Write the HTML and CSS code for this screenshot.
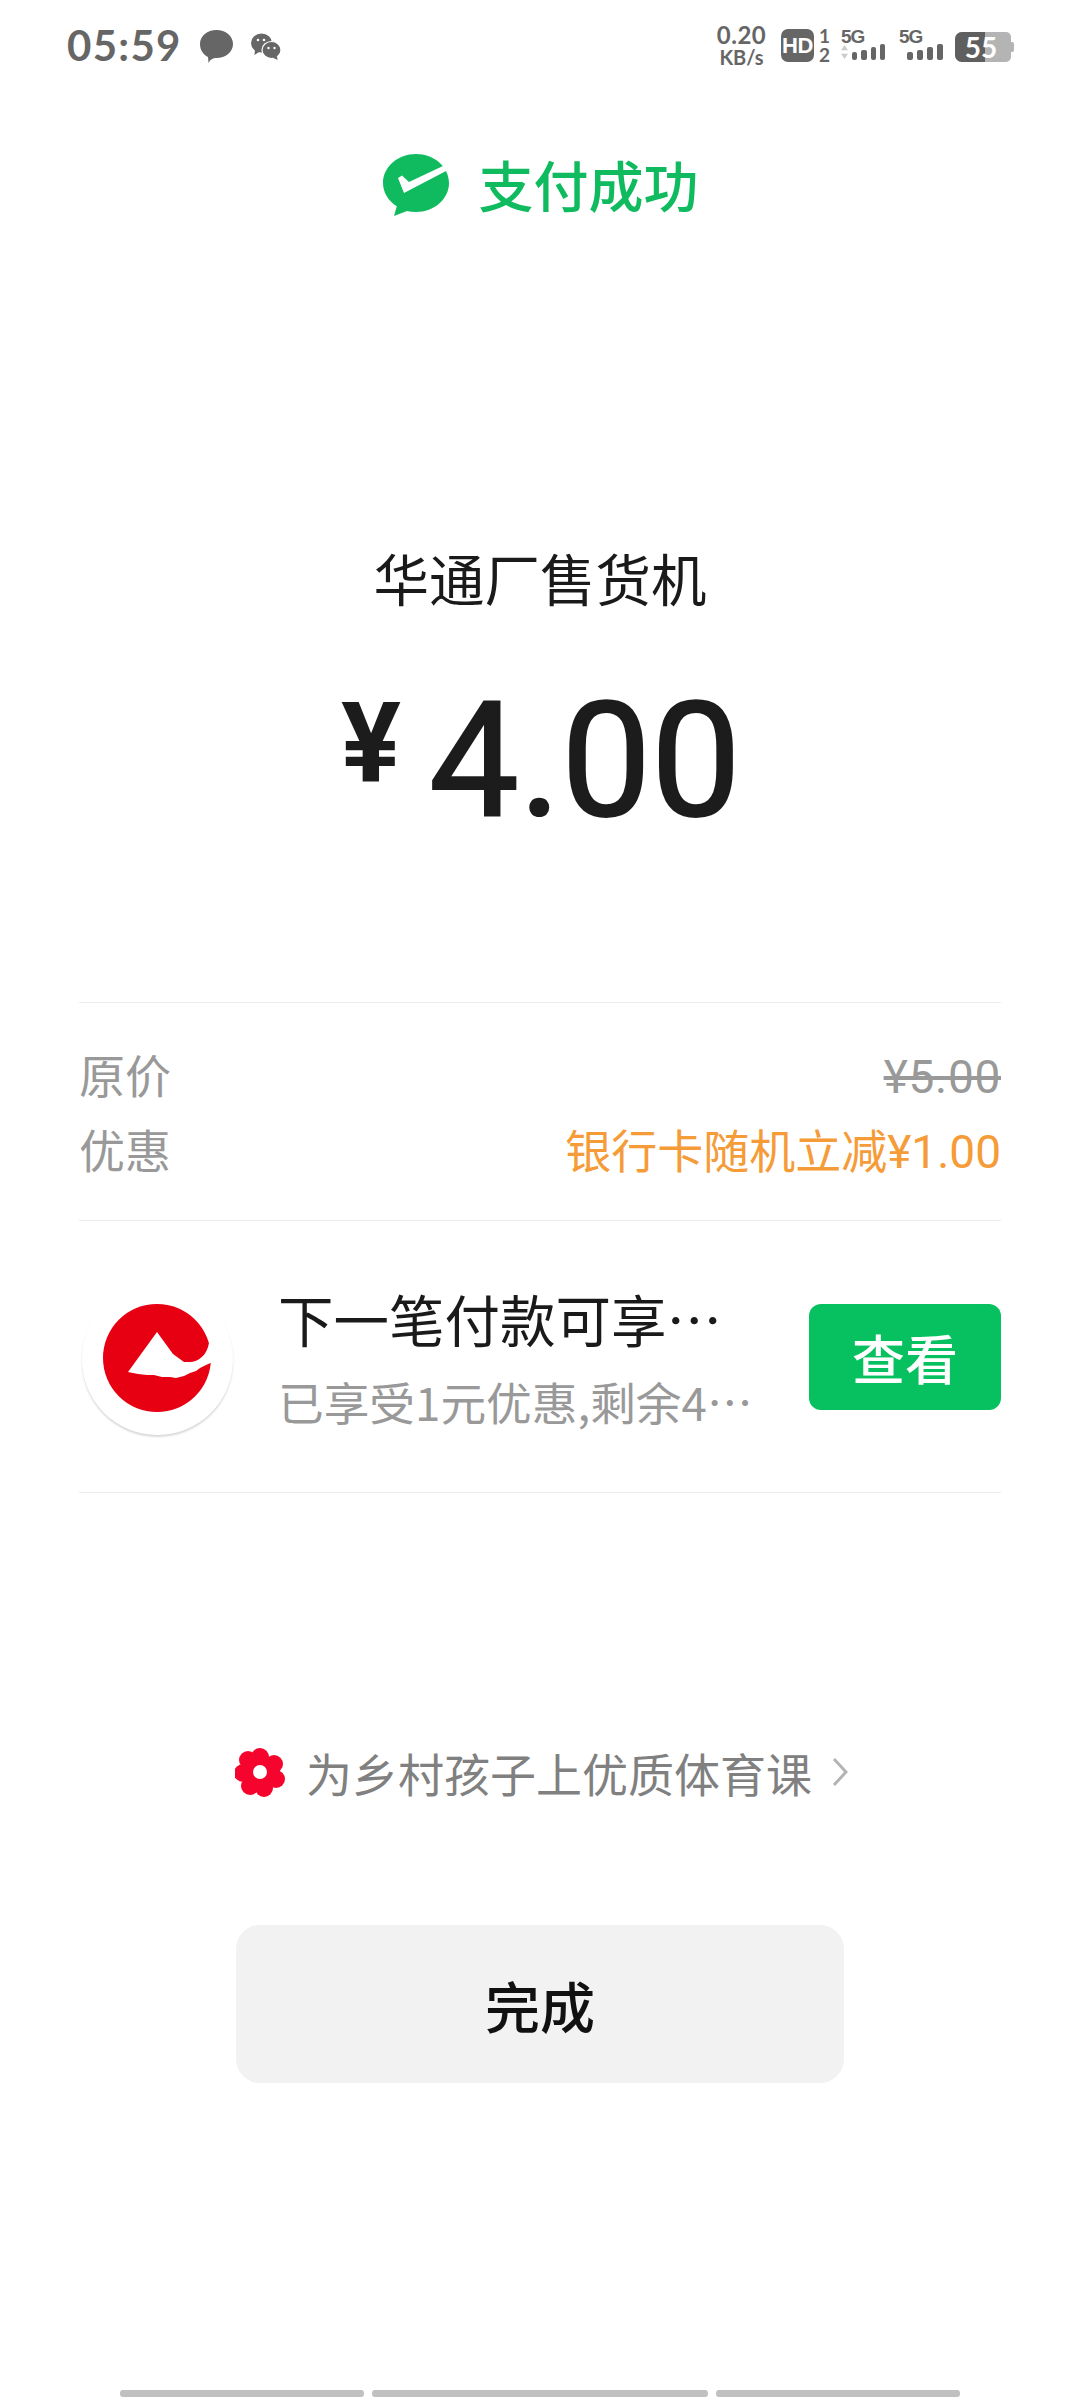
FILE: index.html
```html
<!DOCTYPE html>
<html lang="zh-CN">
<head>
<meta charset="utf-8">
<title>支付成功</title>
<link rel="stylesheet" href="styles.css">
</head>
<body>
<div class="page">
  <div class="status">
    <div class="status-left">
      <span class="time">05:59</span>
      <svg class="ic-bubble" viewBox="0 0 33 33"><path fill="#666" d="M16.500 0C25.600 0 33 6 33 14c0 8-7.400 14-16.500 14-2.300 0-4 .2-6.500 2.500L8.500 33l-.5-6C3 24.500 0 19.800 0 14 0 6 7.400 0 16.500 0z"/></svg>
      <svg class="ic-wechat" viewBox="0 0 30 27"><ellipse cx="10.500" cy="10" rx="10.500" ry="9.500" fill="#666"/><path d="M4 16l-.5 6 6-4z" fill="#666"/><ellipse cx="20.500" cy="17" rx="9.500" ry="8.500" fill="#666" stroke="#fff" stroke-width="1.200"/><path d="M26 23l.5 4-5-2.500z" fill="#666"/><circle cx="7" cy="7" r="1.300" fill="#fff"/><circle cx="13" cy="7" r="1.300" fill="#fff"/><circle cx="17.500" cy="15" r="1.200" fill="#fff"/><circle cx="23.500" cy="15" r="1.200" fill="#fff"/></svg>
    </div>
    <div class="status-right">
      <div class="speed"><span class="speed-num">0.20</span><span class="speed-unit">KB/s</span></div>
      <span class="hd">HD</span>
      <div class="sim-nums"><span>1</span><span>2</span></div>
      <div class="sig">
        <span class="sig-label">5G</span>
        <div class="sig-row">
          <svg class="sig-arrows" viewBox="0 0 8 16"><path d="M4 0l4 6H0z" fill="#ccc"/><path d="M4 16l4-6H0z" fill="#ccc"/></svg>
          <i class="b b1"></i><i class="b b2"></i><i class="b b3"></i><i class="b b4"></i>
        </div>
      </div>
      <div class="sig sig-second">
        <span class="sig-label">5G</span>
        <div class="sig-row">
          <i class="b b1"></i><i class="b b2"></i><i class="b b3"></i><i class="b b4"></i>
        </div>
      </div>
      <div class="battery"><span class="battery-fill"></span><span class="battery-num">55</span><span class="battery-cap"></span></div>
    </div>
  </div>

  <div class="title-row">
    <svg class="ic-pay" viewBox="0 0 66 62"><path fill="#10bb5f" d="M33 0c18.200 0 33 12.900 33 29S51.200 58 33 58c-3.200 0-6.200-.4-9-1.100L11 62l2.800-9.700C5.500 47 0 38.600 0 29 0 12.900 14.800 0 33 0z"/><path fill="#fff" d="M15 24l4-2.500 7 6.500L60 12l4 4.500L21 39z"/></svg>
    <span class="title">支付成功</span>
  </div>

  <div class="merchant">华通厂售货机</div>
  <div class="amount"><span class="yen">¥</span><span class="num">4.00</span></div>

  <div class="details">
    <div class="row"><span>原价</span><span class="orig">¥5.00</span></div>
    <div class="row"><span>优惠</span><span class="promo">银行卡随机立减¥1.00</span></div>
  </div>

  <div class="card">
    <div class="avatar">
      <svg class="logo" viewBox="0 0 112 108"><circle cx="55" cy="54" r="54" fill="#e60012"/><path fill="#fff" d="M55 28L71 50L82 58L86 58C95 59 105 52 107 39L112 39L112 57L111 58L104 61L98 64L94 67L88 69L82 72L74 74L68 73L60 73L52 71L45 71L36 70L26 68Z"/></svg>
    </div>
    <div class="card-text">
      <div class="card-title">下一笔付款可享…</div>
      <div class="card-sub">已享受1元优惠,剩余4…</div>
    </div>
    <div class="view-btn">查看</div>
  </div>

  <div class="campaign">
    <svg class="flower" viewBox="0 0 50 50">
      <g fill="#f5052d"><circle cx="25" cy="10" r="9"/><circle cx="39" cy="17" r="9"/><circle cx="41" cy="32" r="9"/><circle cx="29" cy="41" r="9"/><circle cx="15" cy="39" r="9"/><circle cx="8" cy="26" r="9"/><circle cx="13" cy="13" r="9"/><circle cx="25" cy="25" r="13"/></g>
      <circle cx="25" cy="25" r="7" fill="#fff"/>
    </svg>
    <span class="campaign-text">为乡村孩子上优质体育课</span>
    <svg class="chev" viewBox="0 0 16 30"><path d="M2 2l12 13L2 28" fill="none" stroke="#b4b4b4" stroke-width="3"/></svg>
  </div>

  <div class="done">完成</div>

  <div class="gesture"><i class="g g1"></i><i class="g g2"></i><i class="g g3"></i></div>
</div>
</body>
</html>
```

FILE: styles.css
```css
* { box-sizing: border-box; }
html, body { margin: 0; padding: 0; background: #fff; }
body { font-family: "Noto Sans CJK SC", "Noto Sans", sans-serif; }
.page { width: 1080px; height: 2400px; overflow: hidden; display: flex; flex-direction: column; align-items: center; }

.status { width: 100%; height: 90px; display: flex; justify-content: space-between; align-items: flex-start; padding: 0 69px 0 67px; color: #666; flex: none; }
.status-left { display: flex; align-items: flex-start; padding-top: 22px; }
.time { font: 700 42px/46px Lato, sans-serif; color: #666; letter-spacing: 1.300px; }
.ic-bubble { width: 33px; height: 33px; margin: 8px 0 0 18px; }
.ic-wechat { width: 30px; height: 27px; margin: 11px 0 0 18px; }
.status-right { display: flex; align-items: flex-start; padding-top: 23px; }
.speed { display: flex; flex-direction: column; align-items: center; width: 53px; font-family: Lato, sans-serif; font-weight: 700; }
.speed-num { font-size: 24px; line-height: 24px; letter-spacing: .5px; }
.speed-unit { font-size: 20px; line-height: 20px; }
.hd { width: 33px; height: 33px; margin: 6px 0 0 13px; background: #666; color: #fff; border-radius: 7px; font: 700 22px/33px "Liberation Sans", sans-serif; text-align: center; letter-spacing: -.5px; }
.sim-nums { display: flex; flex-direction: column; margin: 3px 0 0 5px; width: 11px; font: 700 19px/19px Lato, sans-serif; align-items: center; }
.sig { width: 44px; margin: 6px 0 0 11px; }
.sig-second { margin-left: 14px; }
.sig-label { display: block; font: 700 19px/15px "Liberation Sans", sans-serif; letter-spacing: -1px; }
.sig-row { display: flex; align-items: flex-end; justify-content: flex-end; height: 16px; gap: 4px; }
.sig-arrows { width: 8px; height: 16px; }
.b { display: block; width: 6px; background: #666; border-radius: 2px; }
.b1 { height: 8px; } .b2 { height: 10px; } .b3 { height: 13px; } .b4 { height: 16px; }
.battery { position: relative; width: 56px; height: 30px; margin: 9px 0 0 12px; background: #b4b4b4; border-radius: 7px 5px 5px 7px; color: #fff; text-align: center; font: 700 28px/30px Lato, sans-serif; }
.battery-fill { position: absolute; left: 0; top: 0; bottom: 0; width: 30px; background: #5f5f5f; border-radius: 7px 0 0 7px; }
.battery-num { position: relative; margin-right: 4px; }
.battery-cap { position: absolute; right: -3px; top: 10px; width: 3px; height: 10px; background: #b4b4b4; border-radius: 0 2px 2px 0; }

.title-row { display: flex; align-items: center; margin-top: 58px; height: 70px; flex: none; padding-left: 2px; }
.ic-pay { width: 66px; height: 62px; margin: 4px 29px 0 0; }
.title { font-size: 55px; line-height: 70px; color: #10bb5f; font-weight: 500; }

.merchant { margin-top: 319px; font-size: 55.500px; line-height: 80px; color: #1a1a1a; flex: none; }
.amount { margin-top: 64px; display: flex; align-items: flex-start; height: 160px; flex: none; color: #1c1c1c; font-family: Roboto, sans-serif; padding-left: 2px; }
.yen { font-size: 112px; line-height: 124px; font-weight: 700; margin-right: 28px; }
.num { font-size: 160px; line-height: 160px; font-weight: 400; -webkit-text-stroke: 2px #1c1c1c; }

.details { width: 922px; margin-top: 161px; padding: 37px 0 25px; border-top: 1.500px solid #ececec; border-bottom: 1.500px solid #ececec; height: 219px; flex: none; }
.row { display: flex; justify-content: space-between; font-size: 46px; line-height: 75px; color: #999; font-family: Roboto, "Noto Sans CJK SC", sans-serif; }
.orig { text-decoration: line-through; letter-spacing: .7px; }
.promo { color: #f59b37; }

.card { width: 922px; height: 272px; flex: none; display: flex; align-items: center; border-bottom: 1.500px solid #ececec; padding-left: 3px; }
.avatar { width: 151px; height: 151px; flex: none; border-radius: 50%; display: flex; align-items: center; justify-content: center; box-shadow: 0 2px 2px #d9d9d9; margin-top: 6px; }
.logo { width: 112px; height: 108px; margin-bottom: 4px; }
.card-text { width: 531px; flex: none; margin-left: 45px; }
.card-title { font-size: 55.500px; line-height: 80px; color: #1a1a1a; }
.card-sub { font-size: 45.700px; line-height: 70px; color: #999; margin-top: 8px; }
.view-btn { width: 192px; height: 106px; flex: none; background: #07c160; color: #fff; border-radius: 12px; font-size: 53px; line-height: 106px; text-align: center; font-weight: 500; }

.campaign { display: flex; align-items: center; height: 60px; margin-top: 249px; flex: none; padding-left: 3px; }
.flower { width: 50px; height: 50px; }
.campaign-text { font-size: 46px; line-height: 60px; color: #808080; margin-left: 21px; }
.chev { width: 16px; height: 30px; margin-left: 20px; }

.done { width: 608px; height: 158px; margin-top: 123px; flex: none; background: #f2f2f2; border-radius: 24px; font-size: 55px; font-weight: 500; line-height: 158px; text-align: center; color: #111; }

.gesture { width: 840px; display: flex; gap: 8px; margin-top: 307px; flex: none; }
.g { display: block; height: 7px; background: #c0c0c0; border-radius: 3px; }
.g1 { width: 244px; } .g2 { width: 336px; } .g3 { width: 244px; }
```
